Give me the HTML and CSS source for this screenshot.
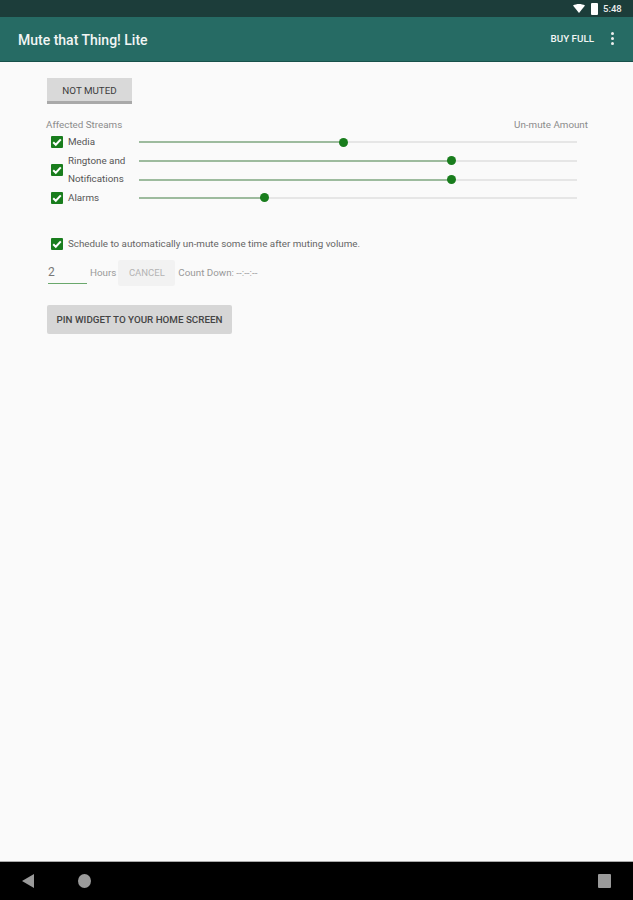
FILE: index.html
```html
<!DOCTYPE html>
<html lang="en">
<head>
  <meta charset="UTF-8" />
  <meta name="viewport" content="width=device-width, initial-scale=1" />
  <title>Mute that Thing! Lite</title>
  <link rel="stylesheet" href="styles.css">
</head>
<body>
  <div class="status-bar">
    <svg class="wifi" viewBox="0 0 12 9" width="12" height="9"><path d="M0 1.500C3.500-.5 8.500-.5 12 1.500L6 9z" fill="#fff"/></svg>
    <span class="battery"></span>
    <span class="clock">5:48</span>
  </div>

  <header class="app-bar">
    <h1>Mute that Thing! Lite</h1>
    <a class="buy">BUY FULL</a>
    <span class="overflow"><i></i><i></i><i></i></span>
  </header>

  <main>
    <button class="mute-btn">NOT MUTED</button>

    <div class="stream-head">
      <span>Affected Streams</span>
      <span>Un-mute Amount</span>
    </div>

    <div class="streams">
      <div class="stream">
        <span class="check"><svg viewBox="0 0 12 12"><path d="M2.200 6.200l2.600 2.600 5-5.400"/></svg></span>
        <span class="stream-name">Media</span>
        <div class="sliders">
          <div class="slider"><div class="fill" style="width:46.800%"></div></div>
        </div>
      </div>
      <div class="stream">
        <span class="check"><svg viewBox="0 0 12 12"><path d="M2.200 6.200l2.600 2.600 5-5.400"/></svg></span>
        <span class="stream-name">Ringtone and Notifications</span>
        <div class="sliders">
          <div class="slider"><div class="fill" style="width:71.500%"></div></div>
          <div class="slider"><div class="fill" style="width:71.500%"></div></div>
        </div>
      </div>
      <div class="stream">
        <span class="check"><svg viewBox="0 0 12 12"><path d="M2.200 6.200l2.600 2.600 5-5.400"/></svg></span>
        <span class="stream-name">Alarms</span>
        <div class="sliders">
          <div class="slider"><div class="fill" style="width:28.700%"></div></div>
        </div>
      </div>
    </div>

    <div class="schedule">
      <span class="check"><svg viewBox="0 0 12 12"><path d="M2.200 6.200l2.600 2.600 5-5.400"/></svg></span>
      <span>Schedule to automatically un-mute some time after muting volume.</span>
    </div>

    <div class="timer">
      <span class="hours-input">2</span>
      <span class="muted-text">Hours</span>
      <button class="cancel-btn">CANCEL</button>
      <span class="muted-text">Count Down: --:--:--</span>
    </div>

    <button class="pin-btn">PIN WIDGET TO YOUR HOME SCREEN</button>
  </main>

  <nav class="nav-bar">
    <svg viewBox="0 0 12 14" width="12" height="14"><path d="M12 0v14L0 7z" fill="#9a9a9a"/></svg>
    <span class="home"></span>
    <span class="recents"></span>
  </nav>
</body>
</html>
```

FILE: styles.css
```css
* {
  box-sizing: border-box;
}
html, body {
  height: 100%;
}
body {
  margin: 0;
  display: flex;
  flex-direction: column;
  height: 900px;
  overflow: hidden;
  background: #fafafa;
  color: #555;
  font-family: Roboto, "Liberation Sans", sans-serif;
}
button {
  display: block;
  border: 0;
  font-family: inherit;
}

/* Status bar */
.status-bar {
  height: 17px;
  flex-shrink: 0;
  background: #1c3d3a;
  display: flex;
  align-items: center;
  justify-content: flex-end;
  padding-right: 10px;
}
.wifi {
  margin-right: 6px;
}
.battery {
  width: 7px;
  height: 12px;
  margin-right: 5px;
  background: #fff;
  border-radius: 1px;
}
.clock {
  color: #eee;
  font-size: 9.500px;
  font-weight: 500;
  width: 20px;
}

/* App bar */
.app-bar {
  height: 45px;
  flex-shrink: 0;
  background: #266b64;
  border-bottom: 1px solid #17514b;
  display: flex;
  align-items: center;
  padding: 2px 18px 0;
  color: #f2f5f4;
}
.app-bar h1 {
  margin: 0;
  font-size: 14px;
  font-weight: 500;
  flex: 1;
}
.buy {
  font-size: 9.800px;
  font-weight: 500;
  margin: -4px 17px 0 0;
}
.overflow {
  display: flex;
  flex-direction: column;
  gap: 2px;
  width: 4px;
  margin-top: -4px;
}
.overflow i {
  width: 3px;
  height: 3px;
  background: #eee;
  border-radius: 50%;
}

/* Content */
main {
  flex: 1;
  padding: 16px 45px 0 47px;
}
.mute-btn {
  width: 85px;
  height: 26px;
  padding: 2px 0 0;
  background: #d9d9d9;
  border-bottom: 3px solid #a9a9a9;
  color: #3c3c3c;
  font-size: 9.800px;
}
.stream-head {
  display: flex;
  justify-content: space-between;
  margin: 15px 0 0 -1px;
  color: #8c8c8c;
  font-size: 9.800px;
  line-height: 12px;
}
.streams {
  margin-top: 2px;
}
.stream {
  display: flex;
  align-items: center;
  padding-left: 4px;
}
.stream-name {
  width: 71px;
  font-size: 9.800px;
  line-height: 18.500px;
  color: #555;
}
.check {
  width: 12px;
  height: 12px;
  margin-right: 5px;
  flex-shrink: 0;
  background: #197d1d;
  border-radius: 1px;
}
.check svg {
  display: block;
  width: 12px;
  height: 12px;
  fill: none;
  stroke: #fff;
  stroke-width: 2;
}
.sliders {
  display: flex;
  flex-direction: column;
  gap: 17px;
  width: 438px;
  margin-right: -7px;
}
.slider {
  height: 2px;
  background: #e6e6e6;
}
.fill {
  position: relative;
  height: 2px;
  background: #9dbb9e;
}
.fill::after {
  content: "";
  position: absolute;
  right: -4px;
  top: -3.500px;
  width: 9px;
  height: 9px;
  border-radius: 50%;
  background: #197d1d;
}
.schedule {
  display: flex;
  align-items: center;
  margin: 31px 0 0 4px;
  font-size: 9.800px;
  line-height: 12px;
  color: #666;
}
.timer {
  display: flex;
  align-items: center;
  margin: 9px 0 0 1px;
  height: 27px;
}
.hours-input {
  width: 39px;
  height: 23px;
  margin-top: -1px;
  padding-top: 4px;
  border-bottom: 1px solid #6aa86c;
  font-size: 12px;
  color: #777;
}
.muted-text {
  margin-left: 3px;
  font-size: 9.800px;
  color: #999;
}
.cancel-btn {
  width: 57px;
  height: 26px;
  margin: 0 0 0 2px;
  padding: 0;
  background: #f2f2f2;
  border-radius: 2px;
  color: #b4b4b4;
  font-size: 9.500px;
}
.pin-btn {
  width: 185px;
  height: 29px;
  margin-top: 19px;
  padding: 0;
  background: #d6d6d6;
  border-radius: 2px;
  color: #444;
  font-size: 9.800px;
  font-weight: 500;
}

/* Bottom navigation */
.nav-bar {
  height: 39px;
  flex-shrink: 0;
  background: #000;
  border-top: 1px solid #aaa;
  display: flex;
  align-items: center;
  padding: 0 22px;
}
.home {
  width: 13px;
  height: 14px;
  margin-left: 44px;
  background: #9a9a9a;
  border-radius: 50%;
}
.recents {
  width: 13px;
  height: 14px;
  margin-left: auto;
  background: #9a9a9a;
  border-radius: 1px;
}
```
